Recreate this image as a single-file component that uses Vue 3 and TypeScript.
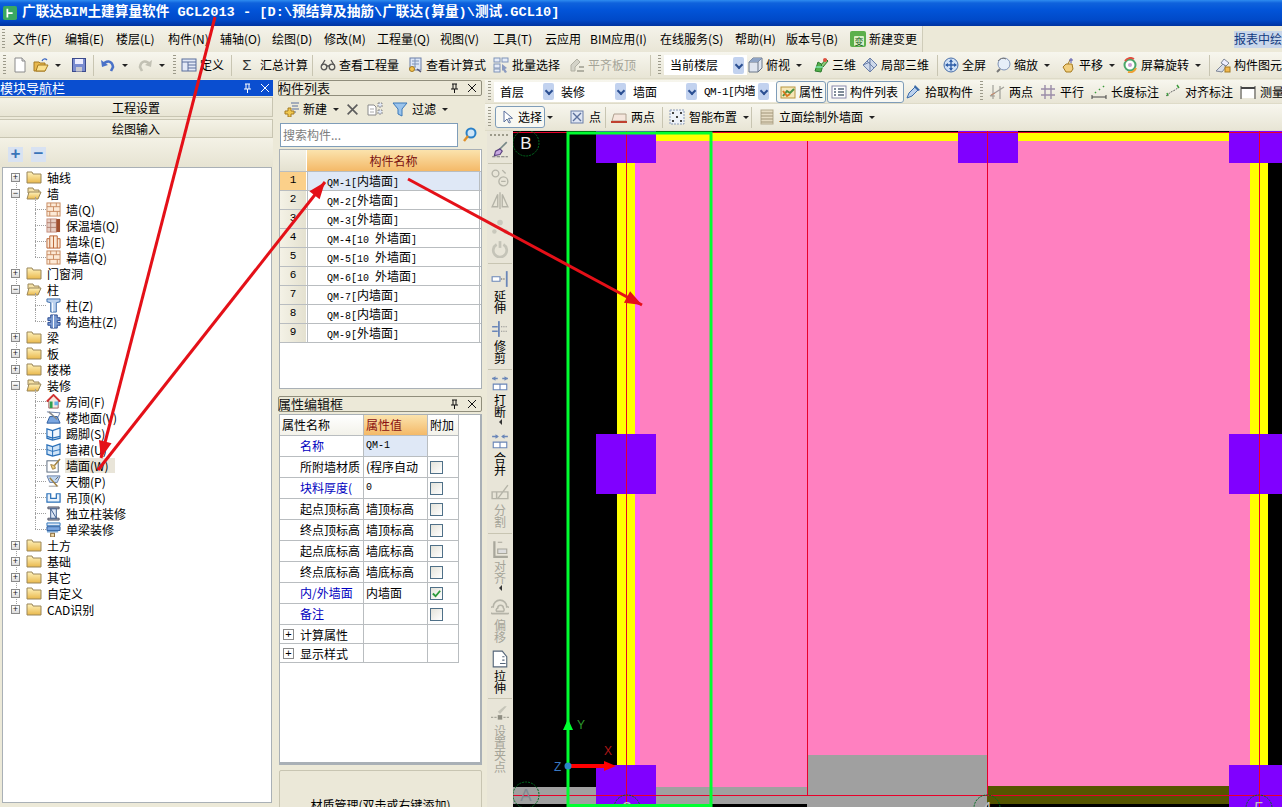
<script setup lang="ts">
interface Raw { x: number; kind?: string; icon?: string; text?: string; gray?: boolean; drop?: boolean; boxed?: boolean; sw?: number; glyph?: string }
interface Item extends Raw { w: number }

function layout(items: Raw[], endX: number): Item[] {
  return items.map((it, i) => ({ ...it, w: (i + 1 < items.length ? items[i + 1].x : endX) - it.x }))
}

const menus = [
  { t: '文件(F)', w: 52 }, { t: '编辑(E)', w: 51 }, { t: '楼层(L)', w: 52 }, { t: '构件(N)', w: 52 },
  { t: '辅轴(O)', w: 52 }, { t: '绘图(D)', w: 52 }, { t: '修改(M)', w: 53 }, { t: '工程量(Q)', w: 63 },
  { t: '视图(V)', w: 53 }, { t: '工具(T)', w: 52 }, { t: '云应用', w: 45 }, { t: 'BIM应用(I)', w: 70 },
  { t: '在线服务(S)', w: 75 }, { t: '帮助(H)', w: 51 }, { t: '版本号(B)', w: 66 }
]

const row1 = layout([
  { x: 3, kind: 'grip' }, { x: 12, icon: 'new' }, { x: 33, icon: 'open', drop: true }, { x: 71, icon: 'save' },
  { x: 93, kind: 'sep' }, { x: 100, icon: 'undo', drop: true }, { x: 137, icon: 'redo', drop: true, gray: true },
  { x: 173, kind: 'grip' }, { x: 181, icon: 'define', text: '定义' }, { x: 231, kind: 'sep' },
  { x: 239, glyph: 'Σ', text: '汇总计算' }, { x: 312, kind: 'sep' }, { x: 320, icon: 'glass', text: '查看工程量' },
  { x: 407, icon: 'calc', text: '查看计算式' }, { x: 493, icon: 'batch', text: '批量选择' },
  { x: 569, icon: 'level', text: '平齐板顶', gray: true }, { x: 650, kind: 'sep' }, { x: 658, kind: 'grip' },
  { x: 664, kind: 'sel', text: '当前楼层', sw: 78 }, { x: 747, icon: 'cube', text: '俯视', drop: true },
  { x: 813, icon: 'd3', text: '三维' }, { x: 862, icon: 'local', text: '局部三维' }, { x: 937, kind: 'sep' },
  { x: 943, icon: 'full', text: '全屏' }, { x: 995, icon: 'zoom', text: '缩放', drop: true },
  { x: 1060, icon: 'pan', text: '平移', drop: true }, { x: 1122, icon: 'spin', text: '屏幕旋转', drop: true },
  { x: 1209, kind: 'sep' }, { x: 1215, icon: 'comp', text: '构件图元' }
], 1290)

const row2 = layout([
  { x: 488, kind: 'grip' }, { x: 494, kind: 'sel', text: '首层', sw: 58 }, { x: 555, kind: 'sel', text: '装修', sw: 69 },
  { x: 627, kind: 'sel', text: '墙面', sw: 68 }, { x: 698, kind: 'sel', text: 'QM-1[内墙', sw: 69 },
  { x: 776, icon: 'attr', text: '属性', boxed: true }, { x: 827, icon: 'list', text: '构件列表', boxed: true },
  { x: 905, icon: 'pick', text: '拾取构件' }, { x: 980, kind: 'grip' }, { x: 989, icon: 'two', text: '两点' },
  { x: 1040, icon: 'par', text: '平行' }, { x: 1091, icon: 'len', text: '长度标注' },
  { x: 1165, icon: 'adim', text: '对齐标注' }, { x: 1240, icon: 'meas', text: '测量' }
], 1290)

const row3 = layout([
  { x: 488, kind: 'grip' }, { x: 495, icon: 'cursor', text: '选择', boxed: true }, { x: 546, kind: 'dropOnly' },
  { x: 569, icon: 'pt', text: '点' }, { x: 605, kind: 'sep' }, { x: 611, icon: 'line', text: '两点' },
  { x: 662, kind: 'sep' }, { x: 669, icon: 'smart', text: '智能布置', drop: true }, { x: 751, kind: 'sep' },
  { x: 759, icon: 'facade', text: '立面绘制外墙面', drop: true }
], 880)

const tree = [
  { t: '轴线', f: 'c' }, { t: '墙', f: 'o' },
  { t: '墙(Q)', i: 'brick' }, { t: '保温墙(Q)', i: 'ins' }, { t: '墙垛(E)', i: 'pier' }, { t: '幕墙(Q)', i: 'brick', last: true },
  { t: '门窗洞', f: 'c' }, { t: '柱', f: 'o' },
  { t: '柱(Z)', i: 'col' }, { t: '构造柱(Z)', i: 'gzz', last: true },
  { t: '梁', f: 'c' }, { t: '板', f: 'c' }, { t: '楼梯', f: 'c' }, { t: '装修', f: 'o' },
  { t: '房间(F)', i: 'room' }, { t: '楼地面(V)', i: 'floor' }, { t: '踢脚(S)', i: 'skirt' }, { t: '墙裙(U)', i: 'dado' },
  { t: '墙面(W)', i: 'wf', sel: true }, { t: '天棚(P)', i: 'ceil' }, { t: '吊顶(K)', i: 'hang' },
  { t: '独立柱装修', i: 'cf' }, { t: '单梁装修', i: 'beam', last: true },
  { t: '土方', f: 'c' }, { t: '基础', f: 'c' }, { t: '其它', f: 'c' }, { t: '自定义', f: 'c' }, { t: 'CAD识别', f: 'c' }
]

const comps = [
  { a: 'QM-1[', b: '内墙面' }, { a: 'QM-2[', b: '外墙面' }, { a: 'QM-3[', b: '外墙面' },
  { a: 'QM-4[10 ', b: '外墙面' }, { a: 'QM-5[10 ', b: '外墙面' }, { a: 'QM-6[10 ', b: '外墙面' },
  { a: 'QM-7[', b: '内墙面' }, { a: 'QM-8[', b: '内墙面' }, { a: 'QM-9[', b: '外墙面' }
]

const props = [
  { n: '名称', v: 'QM-1', blue: true, first: true },
  { n: '所附墙材质', v: '(程序自动', c: 0 }, { n: '块料厚度(', v: '0', blue: true, c: 0, lat: true },
  { n: '起点顶标高', v: '墙顶标高', c: 0 }, { n: '终点顶标高', v: '墙顶标高', c: 0 },
  { n: '起点底标高', v: '墙底标高', c: 0 }, { n: '终点底标高', v: '墙底标高', c: 0 },
  { n: '内/外墙面', v: '内墙面', blue: true, c: 1 }, { n: '备注', v: '', blue: true, c: 0 }
]

const strip = [
  { mt: 4, icon: 'brush' }, { mt: 4, sep: true }, { mt: 5, icon: 'circles', gray: true }, { mt: 4, icon: 'mirror', gray: true },
  { mt: 9, icon: 'move', gray: true }, { mt: 4, icon: 'rot', gray: true }, { mt: 5, sep: true },
  { mt: 6, icon: 'ext', text: '延伸' }, { mt: 6, icon: 'trim', text: '修剪' }, { mt: 5, sep: true },
  { mt: 4, icon: 'brk', text: '打断', tri: true }, { mt: 7, icon: 'mrg', text: '合并' },
  { mt: 8, icon: 'spl', text: '分割', gray: true }, { mt: 5, sep: true },
  { mt: 6, icon: 'alv', text: '对齐', gray: true, tri: true }, { mt: 8, icon: 'ofs', text: '偏移', gray: true },
  { mt: 7, icon: 'str', text: '拉伸' }, { mt: 4, sep: true }, { mt: 6, icon: 'clip', text: '设置夹点', gray: true }
]

function head(x1: number, y1: number, x2: number, y2: number): string {
  const l = Math.hypot(x2 - x1, y2 - y1)
  const ux = (x2 - x1) / l
  const uy = (y2 - y1) / l
  const bx = x2 - ux * 17
  const by = y2 - uy * 17
  return `${x2},${y2} ${bx - uy * 6.5},${by + ux * 6.5} ${bx + uy * 6.5},${by - ux * 6.5}`
}
const arrows = [
  { x1: 215, y1: 17, x2: 101, y2: 458, h: true },
  { x1: 98, y1: 470, x2: 325, y2: 182, h: true },
  { x1: 408, y1: 179, x2: 642, y2: 305, h: true }
].map(a => ({ ...a, p: head(a.x1, a.y1, a.x2, a.y2) }))
</script>

<template>
  <div class="app">
    <svg class="defs" aria-hidden="true">
      <defs>
        <linearGradient id="fy" x1="0" y1="0" x2="0" y2="1"><stop offset="0" stop-color="#fff3bd"/><stop offset="1" stop-color="#e9b84c"/></linearGradient>
        <symbol id="new" viewBox="0 0 16 16"><path d="M3 1h7l3 3v11H3z" fill="#fff" stroke="#8a8a8a"/><path d="M10 1v3h3" fill="#ddd" stroke="#8a8a8a"/></symbol>
        <symbol id="open" viewBox="0 0 16 16"><path d="M1 5h5l1 1h5v8H1z" fill="#e8b84e" stroke="#a57a20"/><path d="M3 14l2-6h10l-3 6z" fill="#fbe08c" stroke="#a57a20"/><path d="M9 4c1-2 3-3 5-1" fill="none" stroke="#3a66c4" stroke-width="1.3"/></symbol>
        <symbol id="save" viewBox="0 0 16 16"><rect x="1.5" y="1.5" width="13" height="13" fill="#7a8cd0" stroke="#3b4a8c"/><rect x="4" y="2" width="8" height="5" fill="#eef"/><rect x="5" y="10" width="6" height="4.5" fill="#c8c8d0"/></symbol>
        <symbol id="undo" viewBox="0 0 16 16"><path d="M3 8c3-5 9-5 10 2l-2 4" fill="none" stroke="#4a72c8" stroke-width="2.6"/><path d="M1 3l1 7 6-2z" fill="#4a72c8"/></symbol>
        <symbol id="redo" viewBox="0 0 16 16"><path d="M13 8c-3-5-9-5-10 2l2 4" fill="none" stroke="#c2c1b4" stroke-width="2.6"/><path d="M15 3l-1 7-6-2z" fill="#c2c1b4"/></symbol>
        <symbol id="define" viewBox="0 0 16 16"><rect x="1" y="2" width="14" height="12" fill="#e3e9f6" stroke="#5a6f9c"/><path d="M1 5h14M7 5v9M7 8h8M7 11h8" stroke="#5a6f9c" fill="none"/></symbol>
        <symbol id="glass" viewBox="0 0 16 16"><g fill="none" stroke="#555" stroke-width="1.3"><circle cx="4" cy="10" r="2.8"/><circle cx="12" cy="10" r="2.8"/><path d="M7 9h2M2 8l3-5M14 8l-3-5"/></g></symbol>
        <symbol id="calc" viewBox="0 0 16 16"><rect x="3" y="1" width="11" height="12" fill="#dde6f6" stroke="#6a7fa8"/><path d="M5 4h7M5 7h7M5 10h4M8 1v9" stroke="#7f93b8"/><circle cx="5" cy="12" r="2.5" fill="#f4c24e" stroke="#a57a20"/><path d="M10 12l4 3" stroke="#557" stroke-width="1.5"/></symbol>
        <symbol id="batch" viewBox="0 0 16 16"><g stroke="#7f93b8" fill="#e6ecf7"><rect x="1" y="1" width="6" height="4"/><rect x="9" y="1" width="6" height="4"/><rect x="1" y="7" width="6" height="4"/><rect x="1" y="12" width="6" height="3"/></g><path d="M9 7l5 4-2 1 2 3-2 1-2-3-1 1z" fill="#8a9ac0"/></symbol>
        <symbol id="level" viewBox="0 0 16 16"><path d="M2 14V8l6-6 3 3-5 5v4z" fill="#d4d3c8" stroke="#b1b0a3"/><path d="M8 14h7M10 10h5" stroke="#b1b0a3" stroke-width="2"/></symbol>
        <symbol id="cube" viewBox="0 0 16 16"><path d="M2 5l4-4h9v10l-4 4H2z" fill="#dfe5ef" stroke="#6a7688"/><path d="M2 5h9v10M11 5l4-4" fill="none" stroke="#6a7688"/><path d="M2 5l4-4h9l-4 4z" fill="#8fa4c4"/></symbol>
        <symbol id="d3" viewBox="0 0 16 16"><path d="M2 14l3-9 5 3-2 7z" fill="#52b04c" stroke="#2c7a2c"/><path d="M8 8l5-6 2 2-5 6z" fill="#8cc878" stroke="#2c7a2c"/><circle cx="12" cy="3" r="2" fill="#e05040"/><path d="M2 10h8" stroke="#9fd"/></symbol>
        <symbol id="local" viewBox="0 0 16 16"><path d="M8 1l7 7-7 7-7-7z" fill="#cdd8ea" stroke="#6a7fa8"/><path d="M5 4l7 7M8 1v14M1 8l7-3" stroke="#6a7fa8" fill="none"/></symbol>
        <symbol id="full" viewBox="0 0 16 16"><circle cx="8" cy="8" r="7" fill="#cfe0f5" stroke="#4a6fa8"/><path d="M8 3v10M3 8h10" stroke="#2f5ea8" stroke-width="1.4"/><path d="M8 2l2 3H6zM8 14l2-3H6zM2 8l3-2v4zM14 8l-3-2v4z" fill="#2f5ea8"/></symbol>
        <symbol id="zoom" viewBox="0 0 16 16"><circle cx="9" cy="7" r="6" fill="#e6eef8" stroke="#7f93b8"/><path d="M3 4a6 6 0 0 1 8-2" fill="none" stroke="#777"/><path d="M5 12l-3 3" stroke="#777" stroke-width="2"/></symbol>
        <symbol id="pan" viewBox="0 0 16 16"><path d="M3 10l3-3h6l1 5-2 3H6z" fill="#f2cf7d" stroke="#a57a20"/><path d="M8 7l2-4" stroke="#a57a20"/><path d="M11 1v5M9 3h4" stroke="#55a" /></symbol>
        <symbol id="spin" viewBox="0 0 16 16"><circle cx="8" cy="8" r="5.5" fill="#fff" stroke="#4aa86a" stroke-width="2"/><path d="M3 4a6.5 6.5 0 0 1 9-2" fill="none" stroke="#e05040" stroke-width="2"/><path d="M14 11a6.5 6.5 0 0 1-8 4" fill="none" stroke="#f0a030" stroke-width="2"/><circle cx="8" cy="8" r="2" fill="#c9a0d0"/></symbol>
        <symbol id="comp" viewBox="0 0 16 16"><path d="M1 14l7-7 3 3-4 5z" fill="#d9dee8" stroke="#7f8798"/><path d="M9 2l5 4-3 3-5-3z" fill="#eef" stroke="#7f8798"/><rect x="10" y="10" width="5" height="5" fill="#f2b84e" stroke="#a57a20"/></symbol>
        <symbol id="attr" viewBox="0 0 16 16"><rect x="1" y="3" width="14" height="11" fill="#f6e7b8" stroke="#b89540"/><path d="M3 12l4-5 3 2 4-4" fill="none" stroke="#4a9040" stroke-width="2"/><path d="M3 7l4 5 3-2" fill="none" stroke="#d87820" stroke-width="2"/></symbol>
        <symbol id="list" viewBox="0 0 16 16"><rect x="1" y="2" width="14" height="12" fill="#fff" stroke="#88a"/><path d="M3 5h2M3 8h2M3 11h2M7 5h6M7 8h6M7 11h6" stroke="#567" stroke-width="1.5"/></symbol>
        <symbol id="pick" viewBox="0 0 16 16"><path d="M2 14l2-5 6-6 3 3-6 6z" fill="#bcd2ee" stroke="#3a6aa8"/><path d="M10 1l5 5-2 1-4-4z" fill="#3a6aa8"/></symbol>
        <symbol id="two" viewBox="0 0 16 16"><path d="M1 12L15 3M4 1v14M11 2v13M1 12h5" stroke="#a09f98" fill="none" stroke-width="1.2"/><path d="M2 11l4-2" stroke="#c86"/></symbol>
        <symbol id="par" viewBox="0 0 16 16"><path d="M1 5h14M1 11h14M5 1v14M11 1v14" stroke="#9a8ca8" stroke-width="1.4"/></symbol>
        <symbol id="len" viewBox="0 0 16 16"><path d="M1 11v4M15 11v4M1 13h14" stroke="#444"/><path d="M4 9l1-1M8 6l1-1M12 3l1-1" stroke="#3a9a3a" stroke-width="1.5"/></symbol>
        <symbol id="adim" viewBox="0 0 16 16"><path d="M1 12l5-4 4-2 4-3" stroke="#666" fill="none" stroke-dasharray="2 1"/><path d="M2 9l1 3M12 1l2 3" stroke="#3a9a3a" stroke-width="1.4"/></symbol>
        <symbol id="meas" viewBox="0 0 16 16"><path d="M1 2v13M15 2v13" stroke="#444"/><path d="M1 4h14" stroke="#444" stroke-width="2"/><rect x="2" y="5" width="12" height="9" fill="#fff"/></symbol>
        <symbol id="cursor" viewBox="0 0 16 16"><path d="M5 2v11l3-3 2 4 1.500-.7-2-4h4z" fill="#fff" stroke="#5a6f9c"/></symbol>
        <symbol id="pt" viewBox="0 0 16 16"><rect x="2" y="2" width="12" height="12" fill="#dfe6f4" stroke="#6a7fa8"/><path d="M4 4l8 8M12 4l-8 8" stroke="#5a6f9c" stroke-width="1.4"/></symbol>
        <symbol id="line" viewBox="0 0 16 16"><path d="M1 12l2-7h12v7z" fill="#f5e6dc" stroke="#b0a090"/><path d="M0 13h16" stroke="#c04030" stroke-width="2"/></symbol>
        <symbol id="smart" viewBox="0 0 16 16"><rect x="1" y="1" width="14" height="14" fill="#eef2f8" stroke="#8a9ab8" stroke-dasharray="2 1"/><path d="M3 3h2v2H3zM11 3h2v2h-2zM7 7h2v2H7zM3 11h2v2H3zM11 11h2v2h-2z" fill="#444"/></symbol>
        <symbol id="facade" viewBox="0 0 16 16"><rect x="2" y="1" width="12" height="14" fill="#e6dcc4" stroke="#b3a98e"/><path d="M2 4h12M2 7h12M2 10h12M2 13h12" stroke="#a09478"/></symbol>
        <symbol id="brick" viewBox="0 0 16 16"><rect x="1" y="1" width="14" height="14" fill="#fce9d6" stroke="#c78a60"/><path d="M1 5h14M1 10h14M5 1v4M11 1v4M8 5v5M4 10v5M12 10v5" stroke="#c78a60"/></symbol>
        <symbol id="ins" viewBox="0 0 16 16"><rect x="1" y="1" width="10" height="14" fill="#e8cfc4" stroke="#c79080"/><path d="M1 5h10M1 10h10M5 1v14" stroke="#b08070"/><rect x="11" y="1" width="4" height="14" fill="#a05030"/></symbol>
        <symbol id="pier" viewBox="0 0 16 16"><path d="M1 5h3V2h8v3h3v10H1z" fill="#fce9d6" stroke="#b86030"/><path d="M4 5v10M12 5v10M8 2v13" stroke="#b86030"/></symbol>
        <symbol id="col" viewBox="0 0 16 16"><path d="M1 1h14v3l-4 1v10H5V5L1 4z" fill="#bcd2ee" stroke="#3a6aa8"/><path d="M7 5v10" stroke="#fff"/></symbol>
        <symbol id="gzz" viewBox="0 0 16 16"><path d="M5 1h7v3h3v3h-3v2h3v3h-3v3H5v-3H2V9h3V7H2V4h3z" fill="#7a9ad0" stroke="#2a4a90"/><path d="M8 1v14" stroke="#fff"/></symbol>
        <symbol id="room" viewBox="0 0 16 16"><path d="M1 8l7-7 7 7-2 0v7H3V8z" fill="#f5e8e0" stroke="#a06060"/><path d="M1 8l7-7 7 7" fill="none" stroke="#d03030" stroke-width="2"/><rect x="4" y="8" width="3" height="7" fill="#30a050"/><rect x="9" y="8" width="4" height="4" fill="#68b0e8"/></symbol>
        <symbol id="floor" viewBox="0 0 16 16"><path d="M1 2l14 1-3 6" fill="none" stroke="#6a7fa8"/><path d="M1 14l3-7h8l3 7z" fill="#7aa6e0" stroke="#2a5a9c"/><path d="M3 2l9 8" stroke="#888" stroke-width="1.6"/></symbol>
        <symbol id="skirt" viewBox="0 0 16 16"><path d="M1 3l6 2 8-3v11l-8 2-6-2z" fill="#f0f6fd" stroke="#2a70b8" stroke-width="1.3"/><path d="M7 5v10M1 11l6 2 8-2" fill="none" stroke="#2a70b8" stroke-width="1.3"/></symbol>
        <symbol id="dado" viewBox="0 0 16 16"><path d="M1 3l6 2 8-3v11l-8 2-6-2z" fill="#cfe4f8" stroke="#2a70b8" stroke-width="1.3"/><path d="M7 5v10M1 8l6 2 8-2" fill="none" stroke="#2a70b8"/></symbol>
        <symbol id="wf" viewBox="0 0 16 16"><rect x="1" y="3" width="12" height="12" fill="#fff" stroke="#55667a"/><path d="M15 1l-6 7" stroke="#a08040" stroke-width="1.6"/><path d="M5 7l4 1 1 3-3 1z" fill="#f0d080" stroke="#a08040"/></symbol>
        <symbol id="ceil" viewBox="0 0 16 16"><path d="M1 2h14l-3 7H4z" fill="#bfd6f0" stroke="#6a7fa8"/><path d="M3 13h10" stroke="#999"/><path d="M4 4l8 9" stroke="#a08040" stroke-width="1.5"/><path d="M13 3l-3 3" stroke="#666"/></symbol>
        <symbol id="hang" viewBox="0 0 16 16"><path d="M1 4h4v5h6V4h4v9H1z" fill="#e8f2fc" stroke="#2a70b8" stroke-width="1.3"/></symbol>
        <symbol id="cf" viewBox="0 0 16 16"><path d="M2 1h12v2H2zM2 13h12v2H2z" fill="#9aa6b8" stroke="#556"/><rect x="5" y="3" width="6" height="10" fill="#dfe8f6" stroke="#3a5a8c"/><path d="M5 3l6 10" stroke="#3a5a8c"/></symbol>
        <symbol id="beam" viewBox="0 0 16 16"><path d="M1 1h14v3H1z" fill="#dfe8f6" stroke="#2a70b8"/><path d="M1 5h14v4H1z" fill="#7aa6e0" stroke="#2a5a9c"/><path d="M1 10h12v1H1z" fill="#2a70b8"/><rect x="5" y="12" width="4" height="4" fill="#f0d8a8" stroke="#806030"/></symbol>
        <symbol id="brush" viewBox="0 0 16 16"><path d="M1 14h14" stroke="#777" stroke-dasharray="3 1"/><path d="M14 1L7 8" stroke="#788" stroke-width="1.5"/><path d="M8 7l-4 2-1 4 5-1 2-3z" fill="#c8a8e0" stroke="#5a4080"/></symbol>
        <symbol id="circles" viewBox="0 0 16 16"><g fill="none" stroke="#b5b4a8" stroke-width="1.2"><circle cx="4" cy="4" r="3"/><circle cx="11" cy="11" r="4"/><path d="M10 1l3 3M9 11h4"/></g></symbol>
        <symbol id="mirror" viewBox="0 0 16 16"><g fill="none" stroke="#b5b4a8" stroke-width="1.2"><path d="M6 3L1 14h5zM10 3l5 11h-5zM8 1v15"/></g></symbol>
        <symbol id="move" viewBox="0 0 16 16"><g fill="#c9c8bc"><circle cx="8" cy="4" r="2.500"/><circle cx="3" cy="12" r="2"/><circle cx="13" cy="12" r="2"/></g></symbol>
        <symbol id="rot" viewBox="0 0 16 16"><path d="M5 4a6 6 0 1 0 6 0" fill="none" stroke="#c5c4b8" stroke-width="2.400"/><path d="M8 1v6" stroke="#c5c4b8" stroke-width="2.400"/></symbol>
        <symbol id="ext" viewBox="0 0 16 16"><path d="M14 1v14" stroke="#6a86b8" stroke-width="1.600"/><path d="M1 6h7v4H1z" fill="#fff" stroke="#6a86b8"/><path d="M9 8h4" stroke="#444" stroke-dasharray="1 1"/></symbol>
        <symbol id="trim" viewBox="0 0 16 16"><path d="M7 1v14" stroke="#6a86b8" stroke-width="1.600"/><path d="M1 6h5M1 10h5" stroke="#6a86b8" stroke-width="1.400"/><path d="M9 6h6M9 10h6" stroke="#888" stroke-dasharray="1 1"/></symbol>
        <symbol id="brk" viewBox="0 0 16 16"><path d="M2 9h12v5H2zM8 9v5" fill="#fff" stroke="#6a86b8"/><path d="M1 4h5M15 4h-5" stroke="#6a86b8" stroke-width="1.300"/><path d="M1 4l3-2v4zM15 4l-3-2v4z" fill="#6a86b8"/></symbol>
        <symbol id="mrg" viewBox="0 0 16 16"><path d="M2 9h12v5H2zM8 9v5" fill="#fff" stroke="#6a86b8"/><path d="M1 4h5M15 4h-5" stroke="#6a86b8" stroke-width="1.300"/><path d="M7 4L4 2v4zM9 4l3-2v4z" fill="#6a86b8"/></symbol>
        <symbol id="spl" viewBox="0 0 16 16"><g fill="none" stroke="#b5b4a8" stroke-width="1.300"><path d="M1 7h14v6H1zM5 7v6M15 1L6 13"/></g></symbol>
        <symbol id="alv" viewBox="0 0 16 16"><path d="M3 1v14h12" fill="none" stroke="#a8a79b" stroke-width="2"/><path d="M6 8h8v4H6zM6 2h4" fill="#ddd" stroke="#a8a79b"/></symbol>
        <symbol id="ofs" viewBox="0 0 16 16"><g fill="none" stroke="#b5b4a8" stroke-width="1.400"><path d="M1 13a3 3 0 0 1 1-6 6 6 0 0 1 12 0 3 3 0 0 1 1 6z"/><path d="M5 11a2 2 0 0 1 1-3 2.500 2.500 0 0 1 5 0 2 2 0 0 1 0 3z"/></g></symbol>
        <symbol id="str" viewBox="0 0 16 16"><path d="M2 1h8l4 5v9H2z" fill="#fff" stroke="#55667a"/><path d="M10 6h2M10 9h2M8 12h5" stroke="#55667a"/></symbol>
        <symbol id="clip" viewBox="0 0 16 16"><path d="M14 1L8 8l-2-2 6-5z" fill="#c5c4b8"/><rect x="6" y="9" width="4" height="4" fill="#8f8e82"/><path d="M0 11h5M11 11h5" stroke="#a8a79b" stroke-dasharray="2 1"/></symbol>
        <symbol id="fc" viewBox="0 0 16 16"><path d="M1 3h5l1 2h8v9H1z" fill="url(#fy)" stroke="#9a8658"/></symbol>
        <symbol id="fo" viewBox="0 0 16 16"><path d="M2 3h5l1 2h5v3H2z" fill="#f5e2a8" stroke="#9a8658"/><path d="M1 14L3 7h12l-3 7z" fill="url(#fy)" stroke="#9a8658"/></symbol>
        <symbol id="pin" viewBox="0 0 10 10"><path d="M3 1h5M4 1v5M7 1v5M2 6h7M5.500 6v4" stroke="currentColor" fill="none"/></symbol>
        <symbol id="cls" viewBox="0 0 10 10"><path d="M1 1l8 8M9 1l-8 8" stroke="currentColor" fill="none"/></symbol>
        <symbol id="mag" viewBox="0 0 16 16"><circle cx="9" cy="6" r="4.500" fill="#cfe6f8" stroke="#2a80c8" stroke-width="2"/><path d="M6 9l-4 5" stroke="#e0902a" stroke-width="2.400"/></symbol>
        <symbol id="nw" viewBox="0 0 16 16"><path d="M7 2h8M8 5h6M8 8h7M7 11h5" stroke="#5a6f9c"/><path d="M1 10h3V7h3v3h3v3H7v3H4v-3H1z" fill="#f0c84e" stroke="#a57a20"/></symbol>
        <symbol id="x" viewBox="0 0 16 16"><path d="M2 2l12 12M14 2L2 14" stroke="#5d5d5d" stroke-width="2"/></symbol>
        <symbol id="cp" viewBox="0 0 16 16"><path d="M1 4h6l2 2v8H1z" fill="#fff" stroke="#8a8a8a"/><path d="M3 8h4M3 11h4" stroke="#aaa"/><path d="M11 2h4v4h-4zM11 9h4v4h-4z" fill="#dfe6f4" stroke="#8a8a8a" stroke-dasharray="2 1"/></symbol>
        <symbol id="flt" viewBox="0 0 16 16"><path d="M1 2h14l-5 6v7l-4-2V8z" fill="#9ac4ec" stroke="#3a78b8"/></symbol>
      </defs>
    </svg>

    <header class="title">
      <svg class="logo" viewBox="0 0 16 16"><rect width="16" height="16" rx="2" fill="#3aa860"/><path d="M5 3v10M5 8h6" stroke="#fff" stroke-width="2" fill="none"/></svg>
      <span>广联达BIM土建算量软件 GCL2013 - [D:\预结算及抽筋\广联达(算量)\测试.GCL10]</span>
    </header>

    <nav class="menubar">
      <div class="menus">
        <i class="gripv"></i>
        <span v-for="m in menus" :key="m.t" class="menu" :style="{ width: m.w + 'px' }">{{ m.t }}</span>
        <svg class="chg" viewBox="0 0 16 16"><rect width="16" height="16" rx="2" fill="#5cb04c"/><rect x="4" y="5" width="10" height="10" rx="1" fill="#d8efc8"/><text x="9" y="13.500" font-size="9" text-anchor="middle" fill="#206020">变</text></svg>
        <span class="menu last">新建变更</span>
      </div>
      <span class="report">报表中绘</span>
    </nav>

    <div class="tbar row1">
      <div v-for="it in row1" :key="it.x" class="ti" :class="[it.kind, { gray: it.gray }]" :style="{ width: it.w + 'px' }">
        <span v-if="it.kind === 'sel'" class="sel" :style="{ width: it.sw + 'px' }"><span class="selt">{{ it.text }}</span><b class="chev"><i></i></b></span>
        <template v-else-if="!it.kind">
          <span v-if="it.glyph" class="glyph">{{ it.glyph }}</span>
          <svg v-else-if="it.icon" class="ic"><use :href="'#' + it.icon" /></svg>
          <span v-if="it.text" class="tt">{{ it.text }}</span>
          <i v-if="it.drop" class="drop"></i>
        </template>
      </div>
    </div>

    <div class="main">
      <aside class="nav">
        <div class="navtitle"><span>模块导航栏</span><svg class="pin"><use href="#pin" /></svg><svg class="cls"><use href="#cls" /></svg></div>
        <div class="navbtn">工程设置</div>
        <div class="navbtn">绘图输入</div>
        <div class="navtools">
          <span class="pm">+</span><span class="pm">−</span>
        </div>
        <div class="tree">
          <div v-for="n in tree" :key="n.t" class="node" :class="{ child: !n.f, last: n.last }">
            <template v-if="n.f">
              <span class="exp">{{ n.f === 'o' ? '−' : '+' }}</span>
              <svg class="fold"><use :href="n.f === 'o' ? '#fo' : '#fc'" /></svg>
              <span class="nt">{{ n.t }}</span>
            </template>
            <template v-else>
              <svg class="ticon"><use :href="'#' + n.i" /></svg>
              <span class="nt" :class="{ nsel: n.sel }">{{ n.t }}</span>
            </template>
          </div>
        </div>
      </aside>

      <section class="mid">
        <div class="ptitle"><span>构件列表</span><svg class="pin"><use href="#pin" /></svg><svg class="cls"><use href="#cls" /></svg></div>
        <div class="midtools">
          <svg class="ic"><use href="#nw" /></svg><span class="nw">新建</span><i class="drop"></i>
          <svg class="ic ml1"><use href="#x" /></svg>
          <svg class="ic ml2"><use href="#cp" /></svg>
          <svg class="ic ml3"><use href="#flt" /></svg><span class="fl">过滤</span><i class="drop"></i>
        </div>
        <div class="search">
          <span class="sinput">搜索构件...</span>
          <svg class="ic mag"><use href="#mag" /></svg>
        </div>
        <div class="listbox">
          <div class="lhead"><span class="lnum"></span><span class="lname">构件名称</span></div>
          <div v-for="(c, i) in comps" :key="c.a" class="lrow" :class="{ on: i === 0 }">
            <span class="lnum">{{ i + 1 }}</span>
            <span class="lcell"><span class="lat">{{ c.a }}</span>{{ c.b }}<span class="lat">]</span></span>
          </div>
        </div>
        <div class="ptitle second"><span>属性编辑框</span><svg class="pin"><use href="#pin" /></svg><svg class="cls"><use href="#cls" /></svg></div>
        <div class="attrbox">
          <div class="attrs">
            <div class="ah">属性名称</div><div class="ah ahv">属性值</div><div class="ah">附加</div>
            <template v-for="p in props" :key="p.n">
              <div class="an" :class="{ blue: p.blue }">{{ p.n }}</div>
              <div class="av" :class="{ first: p.first, mono: p.first || p.lat }">{{ p.v }}</div>
              <div class="ac">
                <span v-if="p.c !== undefined" class="chk">
                  <svg v-if="p.c" viewBox="0 0 12 12"><path d="M2 6l3 3 5-6" fill="none" stroke="#2a9a3a" stroke-width="2" /></svg>
                </span>
              </div>
            </template>
            <div class="an grp"><span class="plus">+</span>计算属性</div><div class="av gh"></div><div class="ac gh"></div>
            <div class="an grp"><span class="plus">+</span>显示样式</div><div class="av gh"></div><div class="ac gh"></div>
          </div>
        </div>
        <div class="matbtn">材质管理(双击或右键添加)</div>
      </section>

      <section class="right">
        <div class="tbar row2">
          <div v-for="it in row2" :key="it.x" class="ti" :class="[it.kind, { boxed: it.boxed }]" :style="{ width: it.w + 'px' }">
            <span v-if="it.kind === 'sel'" class="sel" :style="{ width: it.sw + 'px' }"><span class="selt" :class="{ small: it.x === 698 }">{{ it.text }}</span><b class="chev"><i></i></b></span>
            <template v-else-if="!it.kind">
              <span class="boxin">
                <svg class="ic"><use :href="'#' + it.icon" /></svg>
                <span class="tt">{{ it.text }}</span>
              </span>
            </template>
          </div>
        </div>
        <div class="tbar row3">
          <div v-for="it in row3" :key="it.x" class="ti" :class="[it.kind, { boxed: it.boxed }]" :style="{ width: it.w + 'px' }">
            <i v-if="it.kind === 'dropOnly'" class="drop"></i>
            <template v-else-if="!it.kind">
              <span class="boxin">
                <svg class="ic"><use :href="'#' + it.icon" /></svg>
                <span class="tt">{{ it.text }}</span>
                <i v-if="it.drop" class="drop"></i>
              </span>
            </template>
          </div>
        </div>
        <div class="work">
          <div class="strip">
            <i class="griph"></i>
            <template v-for="(s, i) in strip" :key="i">
              <i v-if="s.sep" class="ssep" :style="{ marginTop: s.mt + 'px' }"></i>
              <div v-else class="sitem" :class="{ gray: s.gray }" :style="{ marginTop: s.mt + 'px' }">
                <svg class="sic"><use :href="'#' + s.icon" /></svg>
                <span v-if="s.text" class="vt">{{ s.text }}</span>
                <i v-if="s.tri" class="ltri"></i>
              </div>
            </template>
          </div>
          <svg class="canvas" viewBox="513 131 769 676" width="769" height="676">
            <rect x="513" y="131" width="769" height="676" fill="#000" />
            <rect x="513" y="787" width="294" height="17" fill="#a0a0a0" />
            <rect x="635" y="141" width="615" height="646" fill="#ff80c0" />
            <rect x="635" y="141" width="5" height="646" fill="#ff66ee" />
            <rect x="807" y="755" width="180" height="52" fill="#a0a0a0" />
            <rect x="987" y="786" width="242" height="18" fill="#555500" />
            <rect x="617" y="141" width="18" height="646" fill="#ffff00" />
            <rect x="1250" y="141" width="18" height="624" fill="#ffff00" />
            <rect x="617" y="132" width="651" height="9" fill="#ffff00" />
            <rect x="1268" y="163" width="14" height="602" fill="#000" />
            <g fill="#8000ff">
              <rect x="596" y="131" width="60" height="32" /><rect x="958" y="131" width="60" height="32" /><rect x="1229" y="131" width="53" height="32" />
              <rect x="596" y="434" width="60" height="60" /><rect x="1229" y="434" width="53" height="60" />
              <rect x="596" y="765" width="60" height="40" /><rect x="1229" y="765" width="53" height="42" />
            </g>
            <g stroke="#e8002a" stroke-width="1" fill="none">
              <path d="M513 132.500H1282M513 795.500H1282M626.500 131V807M807.500 141V795M987.500 131V795M1259.500 131V807" />
            </g>
            <g fill="none" stroke="#006b1f" stroke-dasharray="2 1">
              <circle cx="526" cy="143" r="13" /><circle cx="526" cy="795" r="13" />
              <circle cx="627" cy="808" r="13" /><circle cx="987" cy="808" r="13" /><circle cx="1259" cy="808" r="13" />
            </g>
            <g font-family="Liberation Sans, sans-serif" font-size="17" text-anchor="middle">
              <text x="526" y="149" fill="#f0f0f0">B</text>
              <text x="526" y="801" fill="#808890">A</text>
              <text x="627" y="814" fill="#c0c0c0">3</text>
              <text x="987" y="814" fill="#c0c0c0">4</text>
              <text x="1259" y="814" fill="#c0c0c0">5</text>
            </g>
            <rect x="568" y="133" width="143" height="672.500" fill="none" stroke="#00ff30" stroke-width="3" />
            <path d="M568 730l-5 0 5-11 5 11z" fill="#00ff30" />
            <path d="M568 766h42" stroke="#ff0000" stroke-width="4" />
            <path d="M604 761l12 5-12 5z" fill="#ff0000" />
            <circle cx="568" cy="766" r="3.500" fill="#2a86c8" />
            <g font-family="Liberation Sans, sans-serif" font-size="12">
              <text x="577" y="729" fill="#2c9a2c">Y</text>
              <text x="604" y="755" fill="#b01818">X</text>
              <text x="554" y="771" fill="#3a78c0">Z</text>
            </g>
          </svg>
        </div>
      </section>
    </div>

    <svg class="overlay" viewBox="0 0 1282 807" width="1282" height="807">
      <g v-for="a in arrows" :key="a.x1">
        <line :x1="a.x1" :y1="a.y1" :x2="a.x2" :y2="a.y2" stroke="#e41018" stroke-width="3" />
        <polygon :points="a.p" fill="#e41018" />
      </g>
    </svg>
  </div>
</template>

<style>
html, body { margin: 0; overflow: hidden; background: #ece9d8; }
</style>

<style scoped>
.app { position: relative; width: 1282px; height: 807px; overflow: hidden; background: #ece9d8; color: #000;
  font: 12px/16px "Noto Sans CJK SC", "Liberation Sans", sans-serif; display: flex; flex-direction: column; }
.defs { position: absolute; width: 0; height: 0; }
.overlay { position: absolute; left: 0; top: 0; pointer-events: none; z-index: 5; }

.title { height: 26px; flex: none; display: flex; align-items: center; padding-left: 3px; box-sizing: border-box; color: #fff;
  background: linear-gradient(#2f8cf0 0, #0f62dc 3px, #0254d8 10px, #0049c8 20px, #0033a0 26px);
  font: bold 13.65px/26px "Liberation Mono", "Noto Sans CJK SC", monospace; white-space: pre; }
.logo { width: 14px; height: 16px; margin-right: 5px; flex: none; }

.menubar { height: 26px; flex: none; display: flex; justify-content: space-between; align-items: center; background: #ece9d8; }
.menus { width: 923px; height: 26px; flex: none; display: flex; align-items: center; background: linear-gradient(#f4f3ea, #e9e6d6); border-right: 1px solid #cfccb9; box-sizing: border-box; }
.gripv { width: 3px; height: 20px; margin: 0 8px 0 2px; background: repeating-linear-gradient(#9c9a8a 0 1px, transparent 1px 3px); flex: none; }
.menu { flex: none; white-space: nowrap; }
.menu.last { margin-left: 3px; }
.chg { width: 16px; height: 18px; flex: none; margin-left: -2px; }
.report { width: 48px; height: 17px; background: #c9d6ea; color: #123a80; white-space: nowrap; overflow: hidden; }

.tbar { display: flex; align-items: center; flex: none; overflow: hidden; background: linear-gradient(#f7f6ee, #e8e5d5); border-bottom: 1px solid #dedbc8; box-sizing: border-box; }
.row1 { height: 27px; margin-bottom: 1px; }
.row1 > .ti:first-child { margin-left: 3px; }
.row2 { height: 24px; padding-left: 3px; width: 797px; }
.row3 { height: 27px; padding-left: 3px; width: 797px; }
.ti { flex: none; display: flex; align-items: center; height: 22px; white-space: nowrap; }
.ic { width: 16px; height: 16px; flex: none; }
.tt { margin-left: 3px; }
.gray { color: #a5a498; }
.glyph { width: 16px; text-align: center; font: 15px/16px "Liberation Sans", sans-serif; color: #333; margin-right: 2px; }
.drop { display: inline-block; width: 0; height: 0; margin-left: 6px; flex: none; border: 3px solid transparent; border-top: 3px solid #222; border-bottom: 0; }
.ti.grip::before { content: ""; width: 3px; height: 21px; background: repeating-linear-gradient(#9c9a8a 0 1px, transparent 1px 3px); }
.ti.sep::before { content: ""; width: 1px; height: 21px; background: #c8c5b2; }
.ti.dropOnly .drop { margin-left: 1px; }
.sel { display: flex; align-items: center; justify-content: space-between; height: 20px; background: #fff; box-sizing: border-box; padding-left: 3px; }
.selt { overflow: hidden; }
.selt.small { font-size: 11px; font-family: "Liberation Mono", "Noto Sans CJK SC", monospace; letter-spacing: -0.6px; }
.chev { width: 11px; height: 17px; margin-right: 1px; border-radius: 2px; background: #c2d2ef; display: flex; justify-content: center; flex: none; }
.chev i { width: 4px; height: 4px; margin-top: 5px; border: solid #2b4f92; border-width: 0 2px 2px 0; transform: rotate(45deg); }
.boxin { display: flex; align-items: center; height: 22px; box-sizing: border-box; white-space: nowrap; }
.boxed .boxin { border: 1px solid #7f9db9; border-radius: 3px; background: #f8f8f3; padding: 0 2px 0 3px; margin-right: 1px; width: 100%; }
.row2 .ti:not(.boxed) .tt { margin-left: 4px; }
.row3 .ti:not(.boxed) .tt { margin-left: 4px; }

.main { flex: 1; display: flex; min-height: 0; }
.nav { width: 273px; flex: none; margin-right: 5px; display: flex; flex-direction: column; }
.navtitle, .ptitle { display: flex; align-items: center; height: 16px; flex: none; font-size: 13px; line-height: 16px; }
.navtitle { background: #0a4ed0; color: #fff; }
.navtitle span, .ptitle span { flex: 1; }
.pin { width: 10px; height: 10px; margin-right: 8px; color: inherit; flex: none; }
.cls { width: 10px; height: 10px; margin-right: 4px; color: inherit; flex: none; }
.navtitle .cls { margin-right: 3px; }
.navbtn { margin-top: 1px; height: 20px; line-height: 20px; text-align: center; background: linear-gradient(#f4f2e6, #e8e5d4); border: 1px solid #c8c5b2; border-width: 1px 1px 1px 0; box-sizing: border-box; flex: none; }
.navbtn + .navbtn { margin-top: 2px; height: 19px; line-height: 18px; }
.navtools { height: 29px; flex: none; display: flex; align-items: center; padding: 3px 0 0 8px; gap: 8px; box-sizing: border-box; background: linear-gradient(#f4f2e6, #e6e3d2); }
.pm { width: 15px; height: 15px; background: #d8e2f2; color: #3a74b8; text-align: center; font: bold 17px/14px "Liberation Sans", sans-serif; }
.tree { position: relative; margin: 0 0 4px 2px; width: 270px; flex: 1; background: #fff; border: 1px solid #a9b0b6; box-sizing: border-box; padding-top: 1px; }
.tree::before { content: ""; position: absolute; left: 13px; top: 10px; height: 432px; border-left: 1px dotted #a0a0a0; }
.node { position: relative; height: 16px; display: flex; align-items: center; white-space: nowrap; }
.exp { position: relative; width: 9px; height: 9px; margin-left: 8px; border: 1px solid #8a8a8a; background: linear-gradient(#fff, #ddd); box-sizing: border-box; font: 9px/7px "Liberation Sans", sans-serif; text-align: center; color: #222; flex: none; }
.fold { width: 16px; height: 16px; margin-left: 6px; flex: none; }
.nt { margin-left: 4px; padding: 0 1px; line-height: 15px; }
.child::before { content: ""; position: absolute; left: 32px; top: -4px; bottom: 0; border-left: 1px dotted #a0a0a0; }
.child.last::before { bottom: 8px; }
.child::after { content: ""; position: absolute; left: 32px; width: 11px; top: 8px; border-top: 1px dotted #a0a0a0; }
.ticon { position: relative; z-index: 1; width: 15px; height: 15px; margin-left: 43px; flex: none; }
.child .nt { margin-left: 4px; padding: 0 1px; }
.nsel { background: #e9e5d9; padding-right: 6px !important; }

.mid { width: 204px; flex: none; margin-right: 3px; display: flex; flex-direction: column; padding-left: 1px; box-sizing: border-box; }
.ptitle { border: 1px solid #908e7c; border-radius: 2px; box-sizing: border-box; color: #111; background: #ece9d8; margin-left: -1px; }
.ptitle span { margin-left: -1px; }
.ptitle .pin { margin-right: 8px; }
.second { margin-top: 7px; }
.midtools { height: 26px; display: flex; align-items: center; padding-left: 5px; flex: none; }
.nw { margin-left: 3px; }
.ml1 { margin-left: 7px; width: 13px; height: 13px; }
.ml2 { margin-left: 8px; }
.ml3 { margin-left: 9px; }
.fl { margin-left: 4px; }
.search { height: 24px; margin-top: 1px; display: flex; align-items: center; flex: none; }
.sinput { width: 178px; height: 24px; margin-left: 1px; background: #fff; border: 1px solid #7f9db9; box-sizing: border-box; padding-left: 2px; line-height: 22px; color: #7d7d7d; }
.mag { margin-left: 4px; }
.listbox { height: 240px; margin-top: 2px; flex: none; background: #fff; border: 1px solid #a9b0b6; box-sizing: border-box; }
.lhead { display: flex; height: 21px; }
.lhead .lnum { background: linear-gradient(#f4f2e6, #e4e1d0); height: 21px; }
.lnum { width: 27px; flex: none; text-align: center; box-sizing: border-box; border-right: 1px solid #fff; background: linear-gradient(90deg, #f4f2e6, #e4e1d0); font-family: "Liberation Mono", monospace; font-size: 11px; line-height: 17px; }
.lname { flex: 1; margin-right: 1px; text-align: center; line-height: 21px; color: #7a1010; background: linear-gradient(#fbe3ad, #f4b968); }
.lrow { display: flex; height: 19px; border-top: 1px solid #b9bdc0; box-sizing: border-box; line-height: 17px; }
.lrow.on { background: #dfe8f6; }
.lrow.on .lnum { background: #fbd08a; }
.lrow:last-child { border-bottom: 1px solid #b9bdc0; height: 20px; }
.lcell { padding-left: 19px; white-space: pre; border-left: 1px solid #b9bdc0; flex: 1; margin-right: 1px; border-right: 1px solid #b9bdc0; }
.lat { font: 10px/17px "Liberation Mono", monospace; }

.attrbox { height: 351px; margin-top: 2px; flex: none; background: #fff; border: 1px solid #a9b0b6; border-width: 1px 2px 3px 1px; box-sizing: border-box; }
.attrs { display: grid; grid-template-columns: 84px 64px 31px; grid-template-rows: repeat(10, 21px) 19px 19px; }
.ah { line-height: 20px; padding-left: 2px; border-right: 1px solid #b9bdc0; border-bottom: 1px solid #b9bdc0; background: linear-gradient(#fff, #f3f2ea); }
.ahv { color: #8a1010; background: linear-gradient(#fbe3ad, #f4b968); }
.an { padding-left: 20px; line-height: 19px; white-space: nowrap; overflow: hidden; border-right: 1px solid #b9bdc0; border-bottom: 1px solid #b9bdc0; box-sizing: border-box; }
.an.blue { color: #0000c0; }
.av { padding-left: 2px; line-height: 20px; white-space: nowrap; overflow: hidden; border-right: 1px solid #b9bdc0; border-bottom: 1px solid #b9bdc0; box-sizing: border-box; }
.av.first { background: #dfe8f6; }
.av.mono { font: 10px/20px "Liberation Mono", monospace; }
.ac { border-right: 1px solid #b9bdc0; border-bottom: 1px solid #b9bdc0; display: flex; align-items: center; padding-left: 2px; box-sizing: border-box; }
.chk { width: 13px; height: 13px; border: 1px solid #4f7088; background: linear-gradient(135deg, #e4e3da, #fff); box-sizing: border-box; display: block; }
.chk svg { display: block; width: 11px; height: 11px; }
.an.grp { padding-left: 3px; display: flex; align-items: center; }
.plus { width: 11px; height: 11px; margin-right: 6px; border: 1px solid #8a8a8a; box-sizing: border-box; font: 11px/9px "Liberation Sans", sans-serif; text-align: center; flex: none; }
.matbtn { margin-top: 5px; height: 60px; flex: none; padding-top: 26px; box-sizing: border-box; text-align: center; border: 1px solid #c8c5b2; border-radius: 2px; background: #ebe8d8; white-space: nowrap; }

.right { flex: 1; min-width: 0; display: flex; flex-direction: column; margin-left: 0; }
.work { flex: 1; min-height: 0; display: flex; }
.strip { width: 26px; margin-left: 2px; flex: none; display: flex; flex-direction: column; align-items: center; background: #e8e5d8; }
.griph { width: 20px; height: 2px; margin-top: 3px; margin-bottom: 1px; flex: none; background: repeating-linear-gradient(90deg, #9c9a8a 0 2px, transparent 2px 4px); }
.ssep { display: block; width: 24px; height: 1px; background: #c8c5b2; flex: none; }
.sitem { display: flex; flex-direction: column; align-items: center; flex: none; }
.sic { width: 18px; height: 18px; display: block; }
.vt { width: 12px; font-size: 12px; line-height: 12px; margin-top: 2px; text-align: center; }
.ltri { width: 0; height: 0; margin-top: 1px; border: 3px solid transparent; border-right: 3px solid #333; border-left: 0; }
.canvas { display: block; flex: none; }
</style>
